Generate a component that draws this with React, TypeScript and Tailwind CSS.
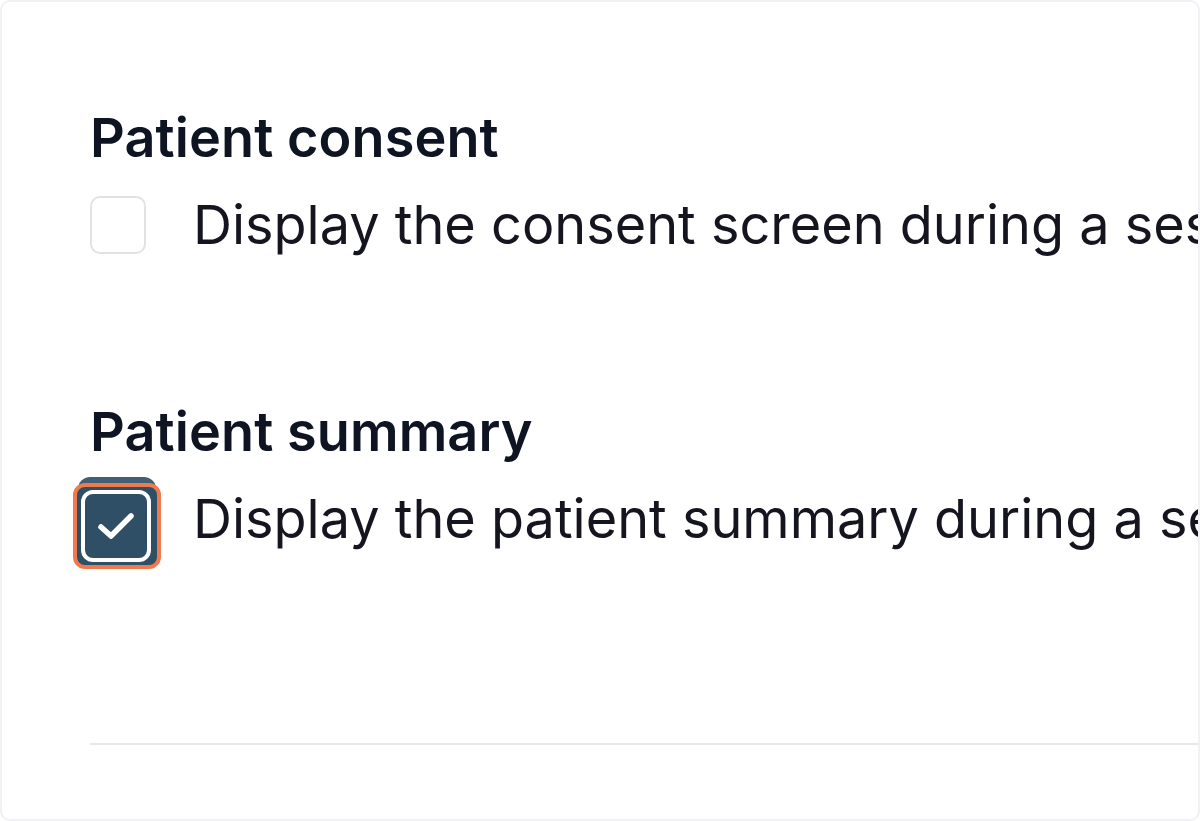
const font = { fontFamily: '"Inter", "Liberation Sans", sans-serif' };

function Section({ title, label, checked }: { title: string; label: string; checked?: boolean }) {
  return (
    <div className="flex flex-col">
      <h2 className="text-[54px] leading-[64px] font-semibold text-[#0f1422] tracking-[0.1px] whitespace-nowrap">
        {title}
      </h2>
      <div className="mt-[23px] flex items-center gap-[47px]">
        {checked ? (
          <div className="relative w-[56px] h-[58px] shrink-0">
            <div className="absolute left-[-12px] top-[-13px] w-[78px] h-[85px] rounded-[12px] bg-[#2e4f66] opacity-90" />
            <div className="absolute left-[-17px] top-[-7px] w-[88px] h-[86px] rounded-[12px] border-[4px] border-[#ee7a4d] bg-[#2e4f66] px-[4px] pt-[3px] pb-[3px]">
              <div className="w-[70px] h-[72px] rounded-[12px] border-[4px] border-white bg-[#2e4f66] flex items-center justify-center">
                <svg width="40" height="32" viewBox="0 0 40 32" fill="none">
                  <path d="M5 17 L15 26 L35 6" stroke="white" strokeWidth="5.5" strokeLinecap="round" strokeLinejoin="round" />
                </svg>
              </div>
            </div>
          </div>
        ) : (
          <div className="w-[56px] h-[58px] shrink-0 rounded-[10px] border-2 border-[#dfe2e7] bg-white" />
        )}
        <p className="text-[54px] leading-[64px] text-[#15151f] whitespace-nowrap">{label}</p>
      </div>
    </div>
  );
}

export default function App() {
  return (
    <div className="w-[1200px] h-[821px] bg-white overflow-hidden" style={font}>
      <div className="w-full h-full rounded-[10px] border-2 border-[#f0f0f5] overflow-hidden pl-[88px] pt-[104px]">
        <Section title="Patient consent" label="Display the consent screen during a session" />
        <div className="mt-[143px]">
          <Section title="Patient summary" label="Display the patient summary during a session" checked />
        </div>
        <div className="mt-[192px] h-[2px] bg-[#e8e8eb]" />
      </div>
    </div>
  );
}
